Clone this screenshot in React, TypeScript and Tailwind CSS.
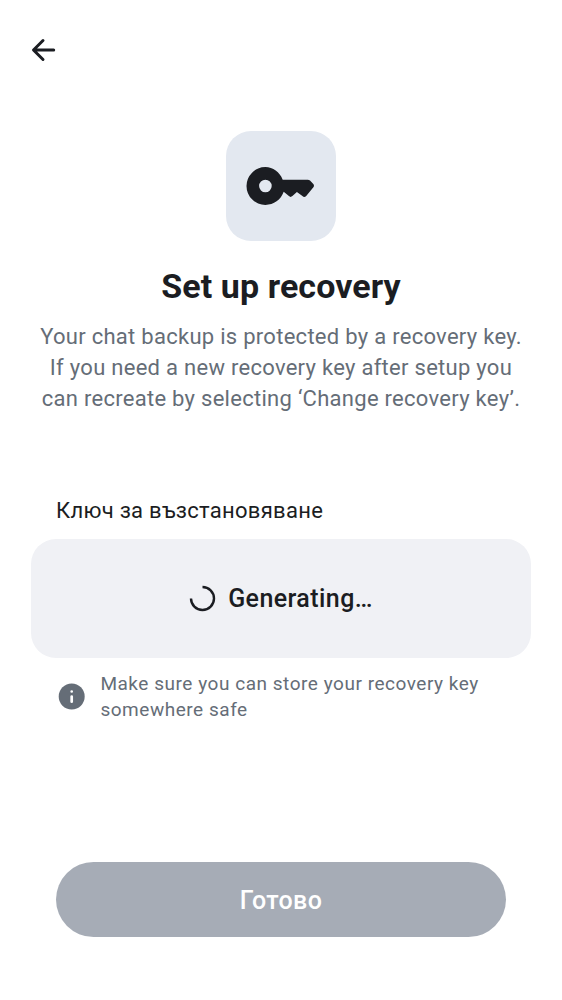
export default function App() {
  return (
    <main className="flex h-[1000px] w-[562px] flex-col bg-white font-['Roboto',sans-serif] text-[#1b1d22]">
      <header className="flex h-[100px] items-center pl-[25px]">
        <button aria-label="Back">
          <svg className="block size-[38px]" viewBox="0 0 38 38" fill="none" stroke="currentColor" strokeWidth="3" strokeLinecap="round" strokeLinejoin="round">
            <path d="M28.7 19H9M18 9.5 8.5 19l9.500 9.500" />
          </svg>
        </button>
      </header>
      <section className="flex flex-col items-center pt-[31px]">
        <div className="flex size-[110px] items-center justify-center rounded-[25px] bg-[#e3e8f0]">
          <svg className="block size-[110px]" viewBox="0 0 110 110" fill="currentColor">
            <path fillRule="evenodd" d="M39.4 36.100C46.900 36.100 53.700 41 56.700 48.700H81.700Q83.100 48.700 84 49.600L87.300 53Q88.600 54.600 87.400 56.200L80.200 65Q78.300 67 76.400 65.100L70.900 60.900 66.400 65.100Q64.600 66.700 62.900 65.100L57.700 60.800C54.900 68.800 47.700 73.900 39.400 73.900A18.900 18.900 0 0 1 39.400 36.100ZM39.400 48.700A6.300 6.300 0 1 0 39.400 61.300 6.300 6.300 0 0 0 39.400 48.700Z" />
          </svg>
        </div>
        <h1 className="mt-[23.400px] text-[34px] leading-[44px] font-bold tracking-[0.08px]">Set up recovery</h1>
        <p className="mt-[12.200px] text-center text-[22px] leading-[31.200px] tracking-[0.28px] text-[#656d77]">
          Your chat backup is protected by a recovery key.<br />
          If you need a new recovery key after setup you<br />
          can recreate by selecting ‘Change recovery key’.
        </p>
      </section>
      <section className="mt-[80.900px] px-[31px]">
        <h2 className="pl-[25px] text-[22px] leading-[31px] tracking-[0.28px]">Ключ за възстановяване</h2>
        <div className="mt-[12.700px] flex h-[119px] items-center justify-center gap-[12.500px] rounded-[25px] bg-[#f0f1f5] pr-[0.500px] text-[25px] font-medium tracking-[0.42px]">
          <svg className="block size-[27px]" viewBox="0 0 27 27" fill="none" stroke="currentColor" strokeWidth="2.4">
            <path d="M13.5 2A11.5 11.5 0 1 1 2 13.5" />
          </svg>
          <span className="pt-px">Generating…</span>
        </div>
        <div className="mt-[13.200px] flex items-center gap-[13.400px] pl-[25px] text-[#656d77]">
          <svg className="block size-[31px]" viewBox="0 0 31 31">
            <circle cx="15.700" cy="15.500" r="13" fill="currentColor" />
            <g fill="none" stroke="white" strokeWidth="2.700" strokeLinecap="round">
              <path d="M15.700 10.500v.01M15.700 15.500v5.200" />
            </g>
          </svg>
          <p className="text-[19px] leading-[26px] tracking-[0.53px]">Make sure you can store your recovery key<br />somewhere safe</p>
        </div>
      </section>
      <button className="mx-[56px] mt-[139.500px] h-[75px] rounded-full bg-[#a6acb6] pt-px text-[25px] font-medium tracking-[0.4px] text-white">Готово</button>
    </main>
  );
}
